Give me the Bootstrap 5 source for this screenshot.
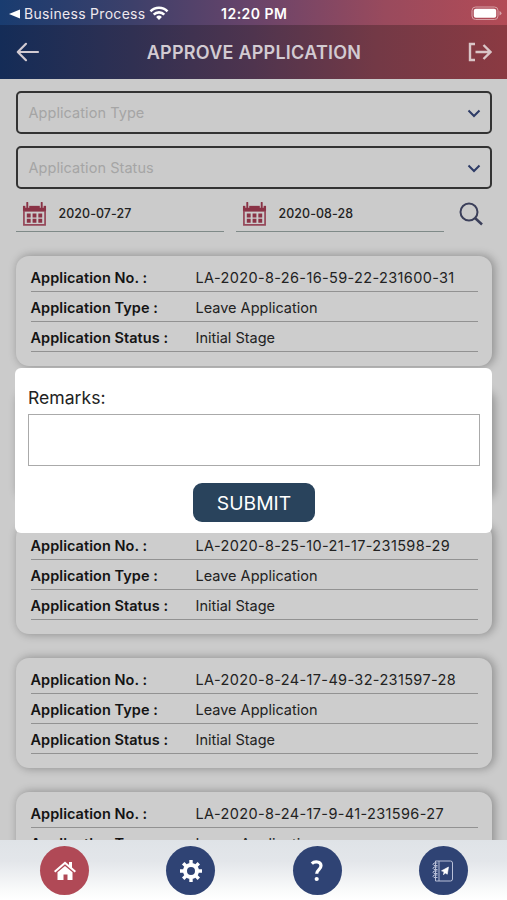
<!DOCTYPE html>
<html lang="en">
<head>
<meta charset="utf-8">
<meta name="viewport" content="width=device-width, initial-scale=1">
<title>Approve Application</title>
<link href="https://cdn.jsdelivr.net/npm/bootstrap@5.3.0/dist/css/bootstrap.min.css" rel="stylesheet">
<style>
body{font-family:Inter,"Liberation Sans",sans-serif;background:#ccc;color:#222}
.screen{width:507px;height:900px;background:#cbcbcb}
svg{display:block;flex:none}
.status-bar{height:25px;padding-top:2px;background:linear-gradient(90deg,#193c70 0,#3d406a 26%,#69446a 50%,#994a5d 76%,#b34b56 100%);color:#eee8ee;font-size:14px}
.back-app{width:221px;padding-left:9px;letter-spacing:.3px}
.clock{font-weight:600;letter-spacing:.5px;color:#fff}
.title-bar{height:54px;background:linear-gradient(90deg,#142c57 0,#303052 26%,#4f344e 50%,#733946 74%,#8b3a42 100%);color:#d2cbd2;padding:0 15px 0 16px}
.title-bar h1{font-size:18px;font-weight:600;letter-spacing:.24px;padding-top:1px}
.content-area{padding:12px 15px 0 15.500px}
.picker{height:43px;border:2px solid #333;border-radius:5px;padding:1px 9px 0 11px;font-size:14.5px;letter-spacing:.06px;color:#a5a5a5;margin-bottom:12px}
.date-row{height:31px;gap:12px}
.date-box{width:208px;height:31px;border-bottom:1px solid #7f8a88;padding:0 0 4px 6px;font-size:12.4px;font-weight:500;letter-spacing:.1px;gap:12px}
.app-list{padding-top:24px;gap:24px}
.app-card{height:110px;flex:none;border-radius:13px;background:#cdcdcd;box-shadow:2px 0 8px 1px rgba(0,0,0,.28);padding:6px 14px 0 15px;font-size:14.5px}
.app-field{height:30px;border-bottom:1.500px solid #929292;line-height:31px}
.app-field dt{width:165px;font-weight:600;color:#141414;letter-spacing:.05px}
.app-field dd{font-weight:400;margin:0}
.app-field .app-number{letter-spacing:.36px}
.remarks{left:15px;top:368px;width:477px;height:165px;background:#fff;border-radius:6px;padding:15px 12px 11px 13px;color:#222}
.remarks label{font-size:17.6px;line-height:30px}
.remarks textarea{height:52px;border:1px solid #aaa;border-radius:0;resize:none;margin-top:1px}
.submit{width:122px;height:39px;margin-top:17px;border-radius:9px;background:#29435c;color:#fff;font-size:19.3px;line-height:39px;padding:0}
.tab-bar{left:0;bottom:0;height:60px;background:linear-gradient(180deg,#dfe3e7 0,#e3e6ea 35%,#fafbfb 85%,#fff 100%);padding:1px 39px 0 40px}
.tab-dot{width:49px;height:49px;background:#2f4374}
.tab-dot.current{background:#b04956}
</style>
<script src="https://cdn.jsdelivr.net/npm/bootstrap@5.3.0/dist/js/bootstrap.bundle.min.js"></script>
</head>
<body>
<svg width="0" height="0" class="position-absolute">
  <symbol id="calendar" viewBox="0 0 26 26">
    <path d="M1 4h24v6H1z" fill="#8a3346"/><path d="M2 9v14.7h22V9" fill="none" stroke="#96485a" stroke-width="1.8"/>
    <path d="M5.5 0v6M20.5 0v6" stroke="#cbcbcb" stroke-width="4"/><path d="M5.5.8v5M20.5.8v5" stroke="#8a3346" stroke-width="2" stroke-linecap="round"/>
    <path d="M5 12h4v4H5zM11 12h4v4h-4zM17 12h4v4h-4zM5 17.5h4v4H5zM11 17.5h4v4h-4zM17 17.5h4v4h-4z" fill="#8a3346"/>
  </symbol>
  <symbol id="chevron" viewBox="0 0 14 9"><path d="M1.500 1.500 7 7l5.500-5.500" fill="none" stroke="#2d3b66" stroke-width="2"/></symbol>
</svg>
<main class="screen position-relative overflow-hidden">
  <header>
    <div class="status-bar d-flex align-items-center">
      <div class="back-app d-flex align-items-center">
        <svg width="11" height="10" viewBox="0 0 11 10"><path d="M0 5 11 .5v9z" fill="#fff"/></svg>
        <span class="ms-1 text-nowrap">Business Process</span>
        <svg class="ms-1" width="20" height="15" viewBox="0 0 20 15" fill="none" stroke="#fff" stroke-width="2.600"><path d="M1.500 5.300a12 12 0 0 1 17 0M4.700 8.600a7.500 7.500 0 0 1 10.600 0"/><path d="m10 14-2.900-3a4.200 4.200 0 0 1 5.800 0z" fill="#fff" stroke="none"/></svg>
      </div>
      <span class="clock">12:20 PM</span>
      <svg class="ms-auto me-1" width="32" height="15" viewBox="0 0 32 15"><rect x="1" y="1" width="26" height="12.500" rx="3.500" fill="none" stroke="#d7a0a6"/><rect x="2.800" y="2.800" width="22.400" height="9" rx="2" fill="#fff"/><path d="M28.500 5v4.500q2-.8 2-2.250T28.500 5" fill="#d7a0a6"/></svg>
    </div>
    <nav class="title-bar d-flex align-items-center justify-content-between">
      <svg width="24" height="20" viewBox="0 0 24 20" fill="none" stroke="#d2cbd2" stroke-width="2.200" stroke-linecap="round" stroke-linejoin="round"><path d="M22 10H2M10 1.800 1.800 10l8.200 8.200"/></svg>
      <h1 class="m-0">APPROVE APPLICATION</h1>
      <svg width="24" height="20" viewBox="0 0 24 20" fill="none" stroke="#dac6c8" stroke-width="2.400"><path d="M7 2H2v16h5M7.500 10H22M15.500 3l7 7-7 7"/></svg>
    </nav>
  </header>
  <section class="content-area">
    <div class="picker d-flex align-items-center justify-content-between">Application Type<svg width="14" height="9"><use href="#chevron"/></svg></div>
    <div class="picker d-flex align-items-center justify-content-between">Application Status<svg width="14" height="9"><use href="#chevron"/></svg></div>
    <div class="date-row d-flex">
      <div class="date-box d-flex align-items-center"><svg width="25" height="25"><use href="#calendar"/></svg>2020-07-27</div>
      <div class="date-box d-flex align-items-center"><svg width="25" height="25"><use href="#calendar"/></svg>2020-08-28</div>
      <svg class="ms-auto me-2" width="26" height="26" viewBox="0 0 26 26" fill="none" stroke="#3b3f5a" stroke-width="2"><circle cx="11" cy="11" r="8.500"/><path d="m17 17 7 6.500" stroke-width="2.500"/></svg>
    </div>
    <div class="app-list d-flex flex-column">
      <article class="app-card">
        <dl class="app-field d-flex m-0"><dt>Application No. :</dt><dd class="app-number">LA-2020-8-26-16-59-22-231600-31</dd></dl>
        <dl class="app-field d-flex m-0"><dt>Application Type :</dt><dd>Leave Application</dd></dl>
        <dl class="app-field d-flex m-0"><dt>Application Status :</dt><dd>Initial Stage</dd></dl>
      </article>
      <article class="app-card"></article>
      <article class="app-card">
        <dl class="app-field d-flex m-0"><dt>Application No. :</dt><dd class="app-number">LA-2020-8-25-10-21-17-231598-29</dd></dl>
        <dl class="app-field d-flex m-0"><dt>Application Type :</dt><dd>Leave Application</dd></dl>
        <dl class="app-field d-flex m-0"><dt>Application Status :</dt><dd>Initial Stage</dd></dl>
      </article>
      <article class="app-card">
        <dl class="app-field d-flex m-0"><dt>Application No. :</dt><dd class="app-number">LA-2020-8-24-17-49-32-231597-28</dd></dl>
        <dl class="app-field d-flex m-0"><dt>Application Type :</dt><dd>Leave Application</dd></dl>
        <dl class="app-field d-flex m-0"><dt>Application Status :</dt><dd>Initial Stage</dd></dl>
      </article>
      <article class="app-card">
        <dl class="app-field d-flex m-0"><dt>Application No. :</dt><dd class="app-number">LA-2020-8-24-17-9-41-231596-27</dd></dl>
        <dl class="app-field d-flex m-0"><dt>Application Type :</dt><dd>Leave Application</dd></dl>
      </article>
    </div>
  </section>
  <form class="remarks position-absolute d-flex flex-column">
    <label for="remarks">Remarks:</label>
    <textarea id="remarks" class="form-control"></textarea>
    <button type="button" class="submit btn align-self-center">SUBMIT</button>
  </form>
  <footer class="tab-bar position-absolute w-100 d-flex align-items-center justify-content-between">
    <a class="tab-dot current rounded-circle d-flex align-items-center justify-content-center" href="#" aria-label="Home"><svg width="22" height="20" viewBox="0 0 22 20" fill="#fff"><path d="M0 10 11 .5l4 3.500V1h3v5.600L22 10l-1.300 1.500L11 3.200l-9.700 8.300z"/><path d="m3.500 11.300 7.500-6.400 7.500 6.400V19h-5v-5.500h-4V19h-6z"/></svg></a>
    <a class="tab-dot rounded-circle d-flex align-items-center justify-content-center" href="#" aria-label="Settings"><svg width="22" height="22" viewBox="0 0 22 22" fill="none" stroke="#fff"><circle cx="11" cy="11" r="6" stroke-width="4"/><path d="M11 0v4M11 18v4M0 11h4M18 11h4M3.200 3.200l3 3M15.800 15.800l3 3M18.800 3.200l-3 3M6.200 15.800l-3 3" stroke-width="3.400"/></svg></a>
    <a class="tab-dot rounded-circle d-flex align-items-center justify-content-center" href="#" aria-label="Help"><svg width="14" height="22" viewBox="0 0 14 22" fill="none" stroke="#fff" stroke-width="3.200"><path d="M1.800 3.700C4.500 1 11 1.200 11 5.800c0 3.800-4.300 3.800-4.300 8"/><circle cx="6.700" cy="19" r="2.100" fill="#fff" stroke="none"/></svg></a>
    <a class="tab-dot rounded-circle d-flex align-items-center justify-content-center" href="#" aria-label="Notebook"><svg width="22" height="22" viewBox="0 0 22 22" fill="none" stroke="#b9c0d8" stroke-width="1"><path d="M3.500 1h15q2 0 2 2v16q0 2-2 2h-15zM7 1v20"/><path d="M5.500 3H2q-2 1.500 0 2.500h3.500M5.500 7H2q-2 1.500 0 2.500h3.500M5.500 11H2q-2 1.500 0 2.500h3.500M5.500 15H2q-2 1.500 0 2.500h3.500"/><path d="m16.500 7-7 3.800 2.500 1-.5 3 1.800-1.800 2 1.200z" fill="#fff" stroke="#fff" stroke-width=".6"/></svg></a>
  </footer>
</main>
</body>
</html>
